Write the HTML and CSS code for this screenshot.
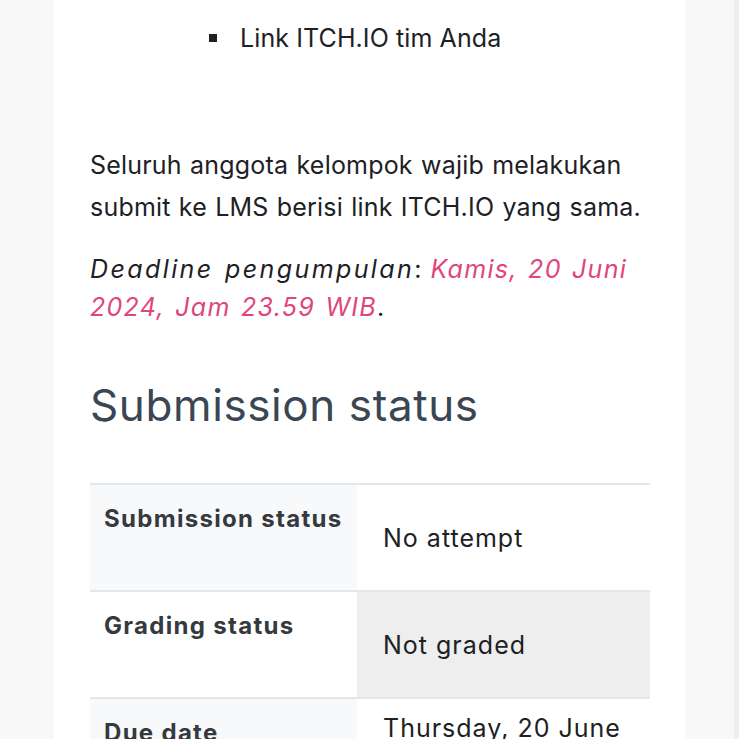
FILE: index.html
```html
<!DOCTYPE html>
<html lang="id">
<head>
<meta charset="utf-8">
<title>Submission status</title>
<link rel="stylesheet" href="styles.css">
</head>
<body>
<div class="shell">
  <main class="card">
    <ul class="sublist">
      <li class="sublist-item">Link ITCH.IO tim Anda</li>
    </ul>
    <p class="para para-main">Seluruh anggota kelompok wajib melakukan submit ke LMS berisi link ITCH.IO yang sama.</p>
    <p class="para para-deadline"><em class="label">Deadline pengumpulan</em>: <em class="accent">Kamis, 20 Juni 2024, Jam 23.59 WIB</em>.</p>
    <h2 class="section-title">Submission status</h2>
    <table class="status-table">
      <tbody>
        <tr class="row row-a">
          <th class="cell-head">Submission status</th>
          <td class="cell-val">No attempt</td>
        </tr>
        <tr class="row row-b">
          <th class="cell-head">Grading status</th>
          <td class="cell-val cell-hover">Not graded</td>
        </tr>
        <tr class="row row-a">
          <th class="cell-head">Due date</th>
          <td class="cell-val cell-top">Thursday, 20 June 2024, 11:59 PM</td>
        </tr>
      </tbody>
    </table>
  </main>
  <div class="filler"></div>
  <div class="track"></div>
</div>
</body>
</html>
```
FILE: styles.css
```css
html, body {
  margin: 0;
  padding: 0;
}
body {
  background: #f8f8f8;
  font-family: Inter, "Open Sans", sans-serif;
  color: #1d2125;
}
.shell {
  display: flex;
  min-height: 100vh;
}
.card {
  margin-left: 54px;
  width: 631px;
  flex: none;
  background: #ffffff;
  padding: 0 30px 40px 36px;
  box-sizing: border-box;
}
.filler {
  flex: 1;
}
.track {
  width: 5px;
  background: #efefef;
}
.sublist {
  list-style: none;
  margin: 17px 0 0 0;
  padding: 0 0 0 150px;
}
.sublist-item {
  position: relative;
  font-size: 25px;
  line-height: 42px;
  letter-spacing: 0.1px;
}
.sublist-item::before {
  content: "";
  position: absolute;
  left: -31px;
  top: 17px;
  width: 8px;
  height: 8px;
  background: #1d2125;
}
.para {
  margin: 0;
  font-size: 25px;
}
.para-main {
  margin-top: 85px;
  line-height: 42px;
  letter-spacing: 0.2px;
  word-spacing: 1px;
}
.para-deadline {
  margin-top: 22px;
  line-height: 38px;
  word-spacing: 2px;
}
.label {
  letter-spacing: 2.4px;
}
.accent {
  color: #e0457b;
  letter-spacing: 1.3px;
}
.section-title {
  margin: 49px 0 0 0;
  font-weight: 400;
  font-size: 44px;
  line-height: 60px;
  color: #3a4752;
  letter-spacing: 0.6px;
}
.status-table {
  margin-top: 48px;
  width: 560px;
  border-collapse: collapse;
}
.row {
  border-top: 2px solid #e4e7ea;
}
.cell-head {
  width: 267px;
  box-sizing: border-box;
  text-align: left;
  vertical-align: top;
  padding: 18px 8px 0 14px;
  height: 107px;
  font-size: 24px;
  line-height: 32px;
  font-weight: 700;
  color: #343a40;
  letter-spacing: 1.3px;
}
.row-a .cell-head {
  background: #f8f9fb;
}
.row-b .cell-head {
  background: #ffffff;
}
.cell-val {
  vertical-align: middle;
  padding: 0 14px 0 26px;
  font-size: 25px;
  line-height: 38px;
  letter-spacing: 1px;
  background: #ffffff;
}
.cell-hover {
  background: #eeeeee;
}
.cell-top {
  vertical-align: top;
  padding-top: 10px;
}
```
